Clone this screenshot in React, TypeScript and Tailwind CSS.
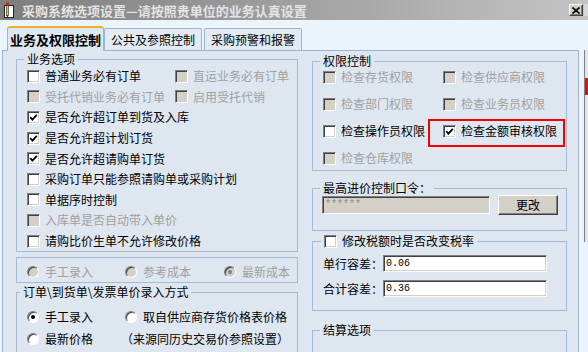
import React from 'react';
import clsx from 'clsx';

// classic win32 sunken / raised edges
const sunken =
  'border border-t-[#808080] border-l-[#808080] border-r-white border-b-white shadow-[inset_1px_1px_0_#404040,inset_-1px_-1px_0_#d4d0c8]';
const raised =
  'border border-t-white border-l-white border-r-[#404040] border-b-[#404040] shadow-[inset_-1px_-1px_0_#808080]';

const CheckBox: React.FC<{ checked?: boolean; disabled?: boolean }> = ({ checked, disabled }) => (
  <span
    className={clsx(
      'inline-flex h-[13px] w-[13px] shrink-0 items-center justify-center',
      sunken,
      disabled ? 'bg-[#d4d0c8]' : 'bg-white'
    )}
  >
    {checked && (
      <svg width="9" height="9" viewBox="0 0 9 9">
        <polyline points="1.2,4.2 3.4,6.6 7.8,1.8" fill="none" stroke="#000" strokeWidth="1.8" />
      </svg>
    )}
  </span>
);

const Radio: React.FC<{ checked?: boolean; disabled?: boolean }> = ({ checked, disabled }) => (
  <span
    className={clsx(
      'inline-flex h-[12px] w-[12px] shrink-0 items-center justify-center rounded-full border border-t-[#808080] border-l-[#808080] border-r-white border-b-white shadow-[inset_1px_1px_0_#404040]',
      disabled ? 'bg-[#d4d0c8]' : 'bg-white'
    )}
  >
    {checked && (
      <span className={clsx('h-[4px] w-[4px] rounded-full', disabled ? 'bg-[#808080]' : 'bg-black')} />
    )}
  </span>
);

interface ItemProps {
  label: string;
  checked?: boolean;
  disabled?: boolean;
  className?: string;
}

const Check: React.FC<ItemProps> = ({ label, checked, disabled, className }) => (
  <div className={clsx('flex items-center gap-[5px] whitespace-nowrap', className)}>
    <CheckBox checked={checked} disabled={disabled} />
    <span className={clsx('leading-[14px]', disabled ? 'text-[#a0a0a0]' : 'text-black')}>{label}</span>
  </div>
);

const RadioItem: React.FC<ItemProps> = ({ label, checked, disabled, className }) => (
  <div className={clsx('flex items-center gap-[6px] whitespace-nowrap', className)}>
    <Radio checked={checked} disabled={disabled} />
    <span className={clsx('leading-[14px]', disabled ? 'text-[#a0a0a0]' : 'text-black')}>{label}</span>
  </div>
);

const Group: React.FC<{
  legend: React.ReactNode;
  className?: string;
  legendClass?: string;
  children?: React.ReactNode;
}> = ({ legend, className, legendClass, children }) => (
  <fieldset className={clsx('min-w-0 border border-[#a6bcd6]', className)}>
    <legend className={clsx('px-[3px] text-[12px]', legendClass ?? 'ml-[7px] h-[14px] leading-[14px]')}>
      {legend}
    </legend>
    {children}
  </fieldset>
);

const Tab: React.FC<{ label: string; active?: boolean; className?: string }> = ({ label, active, className }) =>
  active ? (
    <div className="relative z-10 -mb-px flex h-[25px] w-[97px] items-center justify-center rounded-t-[3px] border border-b-0 border-[#9fb4cc] border-t-2 border-t-[#eeb22a] bg-[#dee7f0] text-[13px] font-bold leading-none">
      {label}
    </div>
  ) : (
    <div
      className={clsx(
        'flex h-[22px] w-[98px] items-center justify-center rounded-t-[2px] border border-b-0 border-[#9fb4cc] bg-[#e2ebf4] text-[12px] leading-none',
        className
      )}
    >
      {label}
    </div>
  );

const TitleIcon = () => (
  <svg width="12" height="16" viewBox="0 0 12 16" className="ml-[3px] shrink-0">
    <rect x="1.5" y="3.5" width="9" height="12" fill="#fff" stroke="#222" />
    <rect x="3" y="0.5" width="3" height="3" fill="#d01818" />
    <rect x="3.5" y="3.5" width="2" height="10" fill="#f2c230" stroke="#222" strokeWidth="0.6" />
    <path d="M3.5 13.5 L4.5 15.5 L5.5 13.5 Z" fill="#222" />
  </svg>
);

export default function App() {
  return (
    <div className="flex h-[352px] w-[588px] flex-col overflow-hidden bg-[#ebf4fc] font-['Noto_Sans_CJK_SC','Noto_Sans',sans-serif] text-[12px] text-black">
      {/* title bar */}
      <div className="flex h-[20px] shrink-0 items-center bg-gradient-to-r from-[#7e7e7e] to-[#c4c4c4]">
        <TitleIcon />
        <span className="ml-[7px] whitespace-nowrap text-[13px] font-bold leading-none text-[#e4e4e4]">
          采购系统选项设置—请按照贵单位的业务认真设置
        </span>
        <button
          className={clsx(
            'ml-auto flex h-[12px] w-[14px] items-center justify-center bg-[#d4d0c8] p-0',
            raised
          )}
        >
          <svg width="8" height="7" viewBox="0 0 8 7">
            <path d="M0.5 0.5 L7.5 6.5 M7.5 0.5 L0.5 6.5" stroke="#000" strokeWidth="1.7" />
          </svg>
        </button>
        <div className="ml-[1px] h-[12px] w-[4px] bg-[#d8d8d8]" />
      </div>

      {/* body */}
      <div className="flex min-h-0 flex-1">
        <div className="ml-[2px] flex w-[577px] shrink-0 flex-col">
          {/* tabs */}
          <div className="flex h-[30px] shrink-0 items-end pl-[5px]">
            <Tab label="业务及权限控制" active />
            <Tab label="公共及参照控制" />
            <Tab label="采购预警和报警" className="ml-[2px]" />
          </div>

          {/* tab panel */}
          <div className="flex flex-1 gap-[14px] border border-[#9fb4cc] bg-[#dee7f0] pl-[13px] pr-[11px]">
            {/* left column */}
            <div className="flex w-[282px] shrink-0 flex-col">
              <Group legend="业务选项" className="mt-[1px]">
                <div className="grid auto-rows-[20.6px] grid-cols-[148px_1fr] pl-[10px]">
                  <Check label="普通业务必有订单" />
                  <Check label="直运业务必有订单" disabled />
                  <Check label="受托代销业务必有订单" disabled />
                  <Check label="启用受托代销" disabled />
                  <Check label="是否允许超订单到货及入库" checked className="col-span-2" />
                  <Check label="是否允许超计划订货" checked className="col-span-2" />
                  <Check label="是否允许超请购单订货" checked className="col-span-2" />
                  <Check label="采购订单只能参照请购单或采购计划" className="col-span-2" />
                  <Check label="单据序时控制" className="col-span-2" />
                  <Check label="入库单是否自动带入单价" disabled className="col-span-2" />
                  <Check label="请购比价生单不允许修改价格" className="col-span-2" />
                </div>
              </Group>

              <div className="mt-[5px] grid h-[26px] grid-cols-[98px_99px_1fr] items-start border border-[#a6bcd6] pl-[10px] pt-[4px]">
                <RadioItem label="手工录入" disabled className="h-[20px]" />
                <RadioItem label="参考成本" disabled className="h-[20px]" />
                <RadioItem label="最新成本" disabled checked className="h-[20px]" />
              </div>

              <Group
                legend="订单\到货单\发票单价录入方式"
                className="mt-[2px] h-[80px]"
                legendClass="ml-[3px] h-[14px] leading-[14px]"
              >
                <div className="grid auto-rows-[22px] grid-cols-[98px_1fr] pl-[10px] pt-[7px]">
                  <RadioItem label="手工录入" checked />
                  <RadioItem label="取自供应商存货价格表价格" />
                  <RadioItem label="最新价格" />
                  <div className="-ml-[4px] flex items-center whitespace-nowrap leading-[14px]">（来源同历史交易价参照设置）</div>
                </div>
              </Group>
            </div>

            {/* right column */}
            <div className="flex w-[255px] shrink-0 flex-col">
              <Group legend="权限控制" className="mt-[4px]" legendClass="ml-[7px] h-[12px] leading-[12px]">
                <div className="grid auto-rows-[20px] grid-cols-[120px_1fr] gap-y-[7px] pb-[2px] pl-[10px]">
                  <Check label="检查存货权限" disabled />
                  <Check label="检查供应商权限" disabled />
                  <Check label="检查部门权限" disabled />
                  <Check label="检查业务员权限" disabled />
                  <Check label="检查操作员权限" />
                  <div className="relative">
                    <Check label="检查金额审核权限" checked className="h-[20px]" />
                    <div className="pointer-events-none absolute left-[-15px] top-[-2px] h-[28px] w-[137px] border-2 border-[#f00000]" />
                  </div>
                  <Check label="检查仓库权限" disabled />
                </div>
              </Group>

              <Group legend="最高进价控制口令：" className="mt-[10px]">
                <div className="flex h-[20px] items-center pl-[9px]">
                  <div
                    className={clsx(
                      'flex h-[18px] w-[168px] items-center bg-[#d4d0c8] pl-[2px] font-["Liberation_Mono",monospace] text-[10px] leading-none text-[#8c8c8c]',
                      sunken
                    )}
                  >
                    ******
                  </div>
                  <button
                    className={clsx(
                      'ml-[8px] flex h-[20px] w-[60px] items-center justify-center bg-[#d4d0c8] text-[12px] leading-none',
                      raised
                    )}
                  >
                    更改
                  </button>
                </div>
                <div className="h-[15px]" />
              </Group>

              <Group
                legend={
                  <span className="flex items-center gap-[5px]">
                    <CheckBox />
                    <span className="leading-[14px]">修改税额时是否改变税率</span>
                  </span>
                }
                className="mt-[3px]"
                legendClass="ml-[8px] h-[14px] leading-[14px]"
              >
                <div className="flex flex-col gap-[8px] pb-[13px] pl-[10px] pt-[7px]">
                  {[
                    ['单行容差：', '0.06'],
                    ['合计容差：', '0.36'],
                  ].map(([label, value]) => (
                    <div key={label} className="flex h-[17px] items-center">
                      <span className="w-[60px] whitespace-nowrap leading-[14px]">{label}</span>
                      <div
                        className={clsx(
                          'flex h-[17px] w-[164px] items-center bg-white pl-[2px] font-["Liberation_Mono",monospace] text-[10px] leading-none',
                          sunken
                        )}
                      >
                        {value}
                      </div>
                    </div>
                  ))}
                </div>
              </Group>

              <Group legend="结算选项" className="mt-[12px] h-[40px]" />
            </div>
          </div>
        </div>

        {/* edge of the window behind */}
        <div className="flex flex-1 flex-col pl-[5px] pt-[30px]">
          <div className="flex h-[192px] flex-col border-l border-[#808080] bg-[#e4e4e4]">
            <div className="mt-[28px] h-[17px] bg-[#e01010]" />
          </div>
        </div>
      </div>
    </div>
  );
}
